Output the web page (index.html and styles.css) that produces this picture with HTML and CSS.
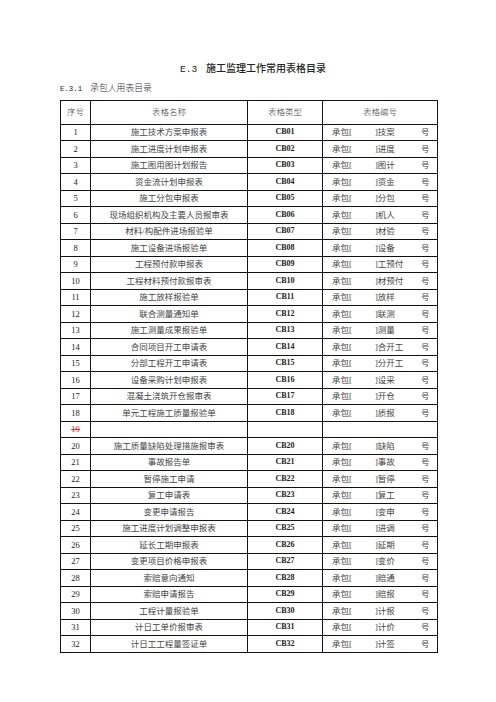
FILE: index.html
```html
<!DOCTYPE html>
<html lang="zh">
<head>
<meta charset="utf-8">
<link rel="stylesheet" href="styles.css">
</head>
<body>
<div class="page">
  <h1 class="title"><span class="tnum">E.3</span>施工监理工作常用表格目录</h1>
  <h2 class="subtitle"><span class="snum">E.3.1</span>承包人用表目录</h2>
  <table class="list">
    <colgroup><col class="c1"><col class="c2"><col class="c3"><col class="c4"></colgroup>
    <thead>
      <tr><th>序号</th><th>表格名称</th><th>表格类型</th><th>表格编号</th></tr>
    </thead>
    <tbody id="rows"></tbody>
  </table>
</div>
<script>
var data = [
  ["1","施工技术方案申报表","CB01","技案"],
  ["2","施工进度计划申报表","CB02","进度"],
  ["3","施工图用图计划报告","CB03","图计"],
  ["4","资金流计划申报表","CB04","资金"],
  ["5","施工分包申报表","CB05","分包"],
  ["6","现场组织机构及主要人员报审表","CB06","机人"],
  ["7","材料/构配件进场报验单","CB07","材验"],
  ["8","施工设备进场报验单","CB08","设备"],
  ["9","工程预付款申报表","CB09","工预付"],
  ["10","工程材料预付款报审表","CB10","材预付"],
  ["11","施工放样报验单","CB11","放样"],
  ["12","联合测量通知单","CB12","联测"],
  ["13","施工测量成果报验单","CB13","测量"],
  ["14","合同项目开工申请表","CB14","合开工"],
  ["15","分部工程开工申请表","CB15","分开工"],
  ["16","设备采购计划申报表","CB16","设采"],
  ["17","混凝土浇筑开仓报审表","CB17","开仓"],
  ["18","单元工程施工质量报验单","CB18","质报"],
  ["19","","",""],
  ["20","施工质量缺陷处理措施报审表","CB20","缺陷"],
  ["21","事故报告单","CB21","事故"],
  ["22","暂停施工申请","CB22","暂停"],
  ["23","复工申请表","CB23","复工"],
  ["24","变更申请报告","CB24","变申"],
  ["25","施工进度计划调整申报表","CB25","进调"],
  ["26","延长工期申报表","CB26","延期"],
  ["27","变更项目价格申报表","CB27","变价"],
  ["28","索赔意向通知","CB28","赔通"],
  ["29","索赔申请报告","CB29","赔报"],
  ["30","工程计量报验单","CB30","计报"],
  ["31","计日工单价报审表","CB31","计价"],
  ["32","计日工工程量签证单","CB32","计签"]
];
var tb = document.getElementById("rows");
data.forEach(function (r) {
  var tr = document.createElement("tr");
  var html = '<td class="num' + (r[0] === "19" ? ' struck' : '') + '">' + r[0] + '</td>' +
             '<td class="name">' + r[1] + '</td>' +
             '<td class="code">' + r[2] + '</td>';
  if (r[3]) {
    html += '<td class="no"><div class="nowrap"><span class="pre">承包[</span><span class="mid">]' + r[3] + '</span><span class="suf">号</span></div></td>';
  } else {
    html += '<td class="no"></td>';
  }
  tr.innerHTML = html;
  tb.appendChild(tr);
});
</script>
</body>
</html>
```
FILE: styles.css
```css
html, body {
  margin: 0;
  padding: 0;
  background: #ffffff;
}
.page {
  width: 496px;
  height: 702px;
  padding-top: 61px;
  box-sizing: border-box;
}
.title {
  margin: 0 0 0 180px;
  font-family: "Noto Sans CJK SC", sans-serif;
  font-size: 10px;
  font-weight: 500;
  line-height: 14px;
  color: #222;
  white-space: nowrap;
}
.tnum {
  font-family: "Liberation Mono", monospace;
  font-weight: 400;
  font-size: 9.5px;
  margin-right: 9px;
}
.subtitle {
  margin: 5px 0 0 60px;
  font-family: "Liberation Serif", "Noto Sans CJK SC", serif;
  font-size: 8.8px;
  font-weight: 300;
  line-height: 12px;
  color: #333;
  white-space: nowrap;
}
.snum {
  font-family: "Liberation Mono", monospace;
  font-size: 7.4px;
  margin-right: 8px;
  color: #222;
}
.list {
  margin: 5px 0 0 60px;
  border-collapse: collapse;
  table-layout: fixed;
  width: 377px;
  font-family: "Liberation Serif", "Noto Sans CJK SC", serif;
  font-size: 8.5px;
  color: #444;
}
.c1 { width: 30px; }
.c2 { width: 157px; }
.c3 { width: 75px; }
.c4 { width: 115px; }
.list th, .list td {
  border: 1px solid #111;
  padding: 0;
  text-align: center;
  vertical-align: middle;
  line-height: 10px;
  white-space: nowrap;
  overflow: hidden;
}
.list th {
  font-weight: 300;
  height: 22.5px;
  color: #444;
}
.list td {
  height: 15.5px;
}
.list td.num {
  color: #222;
  font-size: 8.5px;
}
.list td.struck {
  color: #e0201c;
  text-decoration: line-through;
}
.list td.code {
  color: #222;
  font-weight: 700;
  font-size: 8px;
}
.list td.no {
  text-align: left;
  padding-left: 9px;
}
.nowrap {
  display: flex;
  align-items: center;
}
.pre { width: 43px; }
.mid { width: 46px; }
.suf { width: auto; }
```
